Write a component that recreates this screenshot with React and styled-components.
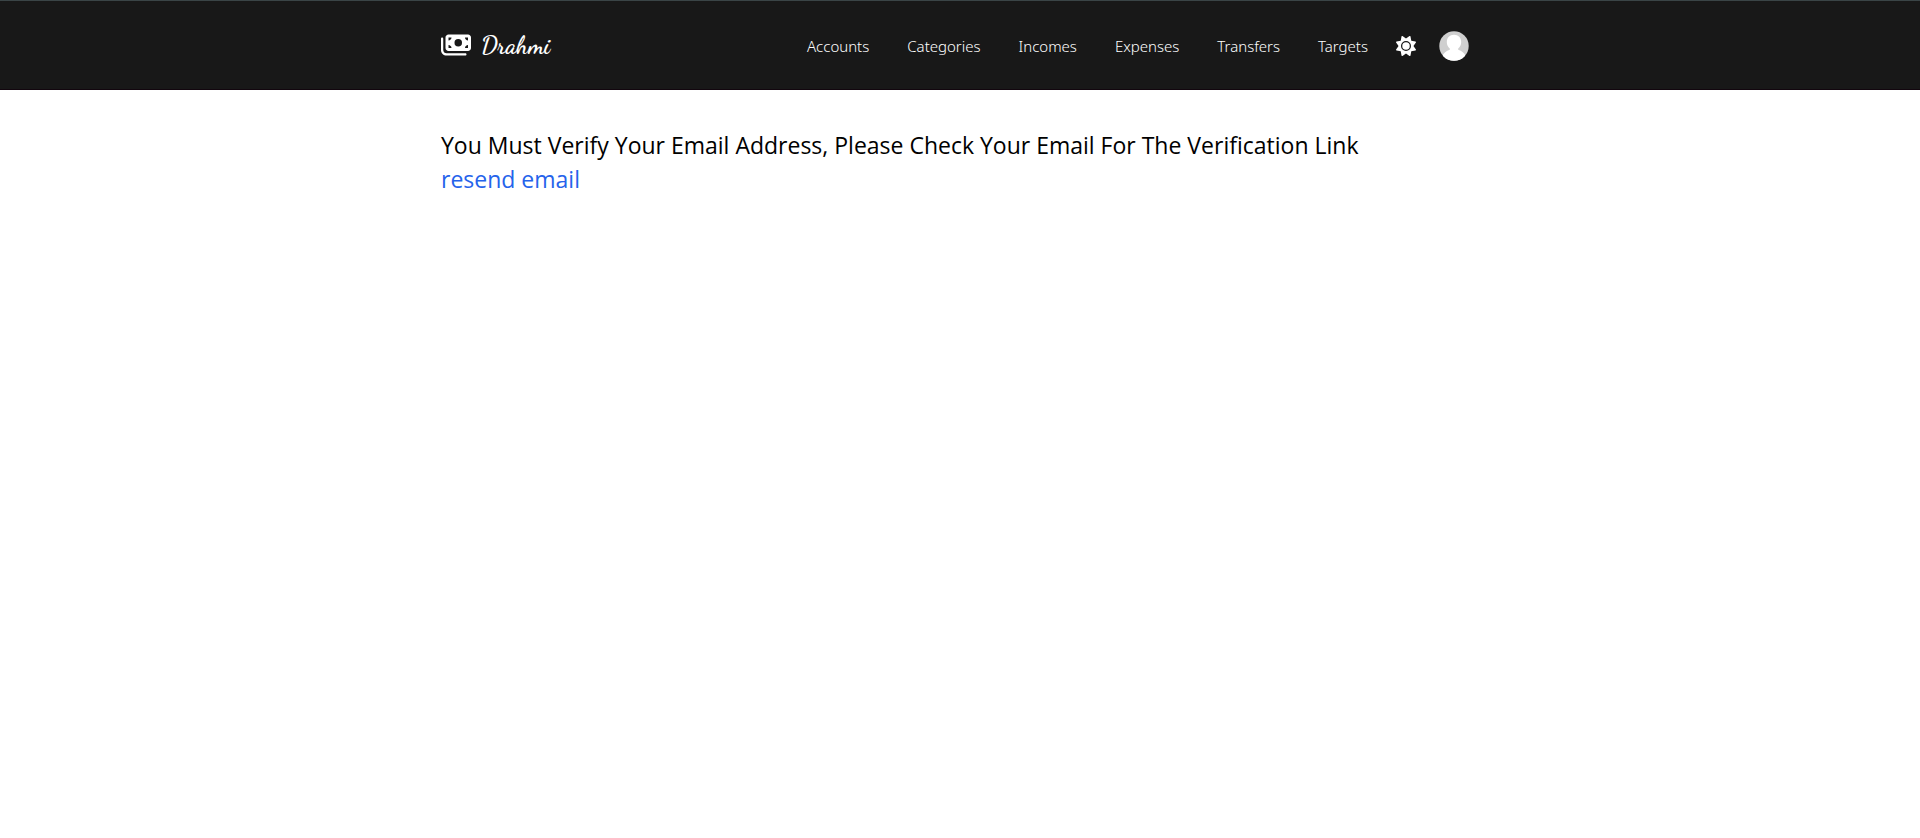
import React from "react";
import styled, { createGlobalStyle } from "styled-components";
import { FaMoneyBills, FaSun } from "react-icons/fa6";

const GlobalStyle = createGlobalStyle`
  *, *::before, *::after { box-sizing: border-box; }
  body {
    margin: 0;
    background: #fff;
    color: #000;
    font-family: "Segoe UI", "Open Sans", "Noto Sans", sans-serif;
  }
`;

const Header = styled.header`
  background: #181818;
  border-top: 1px solid #3a4446;
  border-bottom: 1px solid #12060e;
`;

const Container = styled.div`
  max-width: 1040px;
  margin: 0 auto;
  padding: 0 1px;
`;

const Bar = styled(Container)`
  display: flex;
  align-items: center;
  justify-content: space-between;
  min-height: 88px;
  padding-right: 11px;
`;

const Brand = styled.a`
  display: flex;
  align-items: center;
  gap: 10px;
  color: #fff;
  text-decoration: none;
  font-family: "Dancing Script", cursive;
  font-size: 24px;
  font-weight: 700;
  line-height: 32px;
`;

const BrandName = styled.span`
  padding-top: 2px;
`;

const BillsIcon = styled(FaMoneyBills)`
  width: 30px;
  height: 24px;
`;

const Nav = styled.nav`
  display: flex;
  align-items: center;
  padding-top: 2px;
`;

const Links = styled.ul`
  display: flex;
  gap: 38px;
  margin: 0;
  padding: 0;
  list-style: none;
`;

const NavLink = styled.a`
  color: #fff;
  font-family: "Segoe UI", "Noto Sans", sans-serif;
  font-size: 15px;
  font-weight: 300;
  line-height: 24px;
  text-decoration: none;
`;

const IconButton = styled.button`
  display: flex;
  margin: 0 0 0 ${(p) => p.$gap}px;
  padding: 0;
  border: 0;
  border-radius: 50%;
  background: none;
  color: #fff;
  cursor: pointer;
`;

const Main = styled(Container).attrs({ as: "main" })`
  padding-top: 38px;
`;

const Message = styled.p`
  margin: 0;
  font-size: 23px;
  line-height: 34px;
`;

const ResendLink = styled.a`
  color: #2563eb;
  text-decoration: none;
`;

const Avatar = () => (
  <svg width="30" height="30" viewBox="0 0 30 30" aria-hidden="true">
    <defs>
      <clipPath id="avatar-circle">
        <circle cx="15" cy="15" r="14.7" />
      </clipPath>
    </defs>
    <g clipPath="url(#avatar-circle)">
      <rect width="30" height="30" fill="#cfcfcf" />
      <path
        fill="#fff"
        d="M15 3.800c4.300 0 7.200 3 7.200 7.200 0 2.800-1.200 5.100-3 6.600v1.200c3.600 1 6.200 3.200 7.600 6.400V30H3.200v-4.800c1.400-3.200 4-5.400 7.600-6.400v-1.200c-1.800-1.500-3-3.800-3-6.600 0-4.200 2.900-7.200 7.200-7.200z"
      />
    </g>
  </svg>
);

const links = ["Accounts", "Categories", "Incomes", "Expenses", "Transfers", "Targets"];

export default function App() {
  return (
    <>
      <GlobalStyle />
      <Header>
        <Bar>
          <Brand href="#">
            <BillsIcon />
            <BrandName>Drahmi</BrandName>
          </Brand>
          <Nav>
            <Links>
              {links.map((label) => (
                <li key={label}>
                  <NavLink href="#">{label}</NavLink>
                </li>
              ))}
            </Links>
            <IconButton type="button" $gap={28} aria-label="Toggle theme">
              <FaSun size={20} />
            </IconButton>
            <IconButton type="button" $gap={23} aria-label="Account menu">
              <Avatar />
            </IconButton>
          </Nav>
        </Bar>
      </Header>
      <Main>
        <Message>You Must Verify Your Email Address, Please Check Your Email For The Verification Link</Message>
        <Message>
          <ResendLink href="#">resend email</ResendLink>
        </Message>
      </Main>
    </>
  );
}
